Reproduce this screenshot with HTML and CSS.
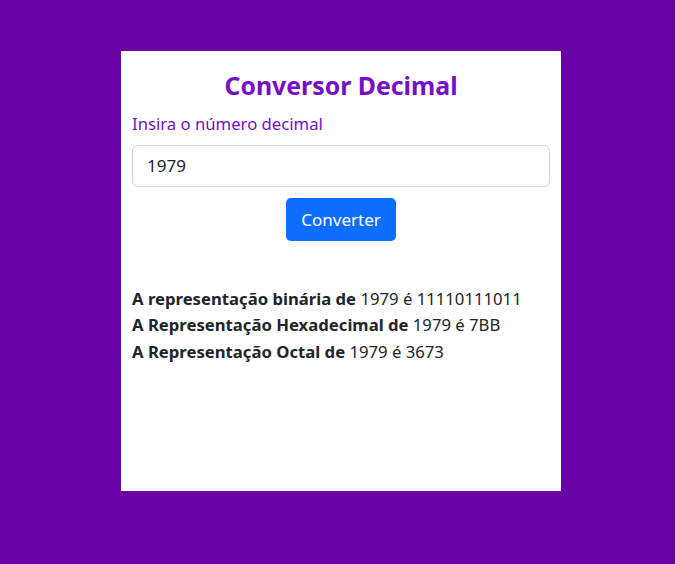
FILE: index.html
```html
<!DOCTYPE html>
<html lang="pt">
<head>
<meta charset="utf-8">
<title>Conversor Decimal</title>
<link rel="stylesheet" href="styles.css">
</head>
<body>
<main class="page">
  <section class="card">
    <h1 class="title">Conversor Decimal</h1>
    <label class="label" for="num">Insira o número decimal</label>
    <input class="field" id="num" type="text" value="1979">
    <div class="actions"><button class="btn" type="button">Converter</button></div>
    <div class="results">
      <p><b>A representação binária de</b> 1979 é 11110111011</p>
      <p><b>A Representação Hexadecimal de</b> 1979 é 7BB</p>
      <p><b>A Representação Octal de</b> 1979 é 3673</p>
    </div>
  </section>
</main>
</body>
</html>
```

FILE: styles.css
```css
* { box-sizing: border-box; }
html, body { margin: 0; height: 100%; }
body {
  background: #6a04a6;
  font-family: "Noto Sans", "Open Sans", sans-serif;
  font-size: 16.7px;
  line-height: 1.5;
  color: #212529;
}
.page {
  display: flex;
  justify-content: center;
  padding: 51px 0 0 7px;
}
.card {
  width: 440px;
  height: 440px;
  background: #fff;
  padding: 11px;
  display: flex;
  flex-direction: column;
}
.title {
  margin: 9px 0 10px;
  font-size: 24.85px;
  line-height: 1.2;
  text-align: center;
  color: #7510c4;
  font-weight: 700;
}
.label {
  color: #7510c4;
  margin-bottom: 9px;
}
.field {
  height: 42px;
  width: 100%;
  border: 1px solid #ced4da;
  border-radius: 6px;
  padding: 0 14px;
  font: inherit;
  font-size: 17px;
  color: #212529;
}
.actions {
  display: flex;
  justify-content: center;
  margin-top: 11px;
}
.btn {
  width: 110px;
  height: 43px;
  border: none;
  border-radius: 5px;
  background: #0d6efd;
  color: #fff;
  font: inherit;
  font-size: 17px;
  padding: 0;
}
.results {
  margin-top: 45px;
}
.results p { margin: 0; line-height: 26.5px; }
.results b { font-weight: 700; }
```
